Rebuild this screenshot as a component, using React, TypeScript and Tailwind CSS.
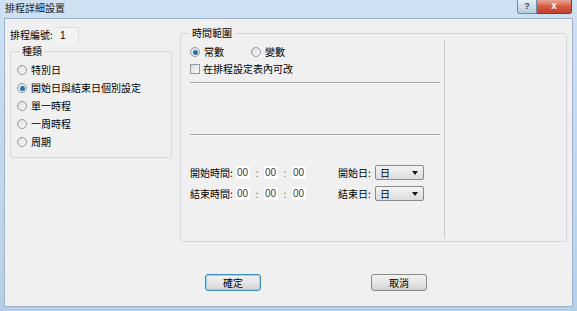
import React from "react";

const FONT = "font-['Noto_Sans_CJK_TC','Noto_Sans',sans-serif]";

const KINDS = ["特別日", "開始日與結束日個別設定", "單一時程", "一周時程", "周期"];

function Radio({ checked }: { checked?: boolean }) {
  return (
    <span className="w-[10px] h-[10px] rounded-full border border-[#8f9aa5] bg-gradient-to-br from-[#dcdcdc] to-[#fbfbfb] flex items-center justify-center shrink-0">
      {checked && <span className="w-[5px] h-[5px] rounded-full bg-[#2d6fa8]" />}
    </span>
  );
}

function Box({ value }: { value: string }) {
  return (
    <span className="w-[16px] h-[15px] bg-white border border-[#eeeeee] text-[10px] leading-[13px] pl-[1px] text-[#3a3a3a] font-['Liberation_Sans',sans-serif]">
      {value}
    </span>
  );
}

function Combo() {
  return (
    <span className="w-[49px] h-[15px] rounded-[2px] border border-[#8a8a8a] bg-gradient-to-b from-[#f4f4f4] to-[#dcdcdc] flex items-center pl-[4px] pr-[5px] text-[10px] leading-none">
      <span>日</span>
      <svg className="ml-auto" width="6" height="4" viewBox="0 0 6 4">
        <path d="M0 0 H6 L3 4 Z" fill="#1a1a1a" />
      </svg>
    </span>
  );
}

function TimeRow({ label, dayLabel }: { label: string; dayLabel: string }) {
  return (
    <div className="flex items-center h-[15px]">
      <span className="w-[45px] text-[10px] leading-none">{label}</span>
      <Box value="00" />
      <span className="w-[12px] text-center text-[10px] text-[#777]">:</span>
      <Box value="00" />
      <span className="w-[12px] text-center text-[10px] text-[#777]">:</span>
      <Box value="00" />
      <span className="ml-[31px] w-[37px] text-[10px] leading-none">{dayLabel}</span>
      <Combo />
    </div>
  );
}

function Button({ label, primary }: { label: string; primary?: boolean }) {
  return (
    <button
      className={`w-[56px] h-[17px] rounded-[3px] border text-[10px] leading-none bg-gradient-to-b from-[#f3f3f3] via-[#e6e6e6] to-[#d2d2d2] ${
        primary ? "border-[#3c8fb8] shadow-[inset_0_0_0_1px_#9fd3ec]" : "border-[#8a8a8a]"
      }`}
    >
      {label}
    </button>
  );
}

export default function App() {
  return (
    <div className={`w-[577px] h-[311px] flex flex-col bg-gradient-to-b from-[#cfe1f3] to-[#b6cfe9] text-black ${FONT}`}>
      {/* title bar */}
      <div className="h-[18px] flex items-start shrink-0">
        <span className="ml-[5px] mt-[2px] text-[10px] leading-[12px] text-[#1b1b1b]">排程詳細設置</span>
        <div className="ml-auto mr-[5px] flex">
          <span className="w-[20px] h-[14px] rounded-bl-[3px] border border-t-0 border-[#6d88a8] bg-gradient-to-b from-[#e6eef7] to-[#b9cbe0] text-[9px] leading-[13px] text-center font-bold text-[#3b4c60] font-['Liberation_Sans',sans-serif]">
            ?
          </span>
          <span className="w-[35px] h-[14px] rounded-br-[3px] border border-t-0 border-l-0 border-[#7a3b30] bg-gradient-to-b from-[#e9a597] via-[#d35a44] to-[#c2402b] text-[10px] leading-[12px] text-center font-bold text-white font-['Liberation_Sans',sans-serif]">
            x
          </span>
        </div>
      </div>

      {/* client area */}
      <div className="flex-1 ml-[4px] mr-[4px] mb-[4px] bg-[#f0f0f0] border border-[#9fb4cb] flex flex-col">
        <div className="flex items-start">
          {/* left column */}
          <div className="ml-[5px] w-[162px] flex flex-col">
            <div className="mt-[8px] h-[15px] flex items-center">
              <span className="text-[10px] leading-none w-[46px]">排程編號:</span>
              <span className="w-[23px] h-[16px] border-t border-r border-[#dcdcdc] bg-[#f3f3f3] text-[10px] leading-[15px] pl-[4px] font-['Liberation_Sans',sans-serif]">
                1
              </span>
            </div>
            <fieldset className="mt-[3px] m-0 p-0 min-w-0 border border-[#d3d9df] rounded-[3px] pl-[6px] pt-[4px] pb-[6px]">
              <legend className="ml-[3px] px-[2px] text-[10px] leading-[12px]">種類</legend>
              {KINDS.map((k, i) => (
                <div key={k} className="h-[18px] flex items-center gap-[4px]">
                  <Radio checked={i === 1} />
                  <span className="text-[10px] leading-none">{k}</span>
                </div>
              ))}
            </fieldset>
          </div>

          {/* right group */}
          <fieldset className="ml-[8px] mt-[8px] m-0 p-0 min-w-0 w-[387px] h-[215px] border border-[#d3d9df] rounded-[3px]">
            <legend className="ml-[9px] px-[2px] text-[10px] leading-[12px]">時間範圍</legend>
            <div className="mt-[1px] w-[264px] h-[198px] border-r border-[#c9c9c9] pl-[9px] flex flex-col">
              <div className="mt-[5px] h-[14px] flex items-center">
                <Radio checked />
                <span className="ml-[4px] w-[47px] text-[10px] leading-none">常數</span>
                <Radio />
                <span className="ml-[4px] text-[10px] leading-none">變數</span>
              </div>
              <div className="mt-[3px] h-[14px] flex items-center gap-[3px]">
                <span className="w-[10px] h-[10px] border border-[#8f9aa5] bg-gradient-to-br from-[#dcdcdc] to-[#fbfbfb]" />
                <span className="text-[10px] leading-none">在排程設定表內可改</span>
              </div>
              <div className="mt-[6px] w-[250px] border-t border-b border-t-[#a8a8a8] border-b-white" />
              <div className="mt-[50px] w-[250px] border-t border-b border-t-[#a8a8a8] border-b-white" />
              <div className="mt-[29px]">
                <TimeRow label="開始時間:" dayLabel="開始日:" />
              </div>
              <div className="mt-[6px]">
                <TimeRow label="結束時間:" dayLabel="結束日:" />
              </div>
            </div>
          </fieldset>
        </div>

        {/* buttons */}
        <div className="mt-[32px] pl-[200px] flex gap-[110px]">
          <Button label="確定" primary />
          <Button label="取消" />
        </div>
      </div>
    </div>
  );
}
